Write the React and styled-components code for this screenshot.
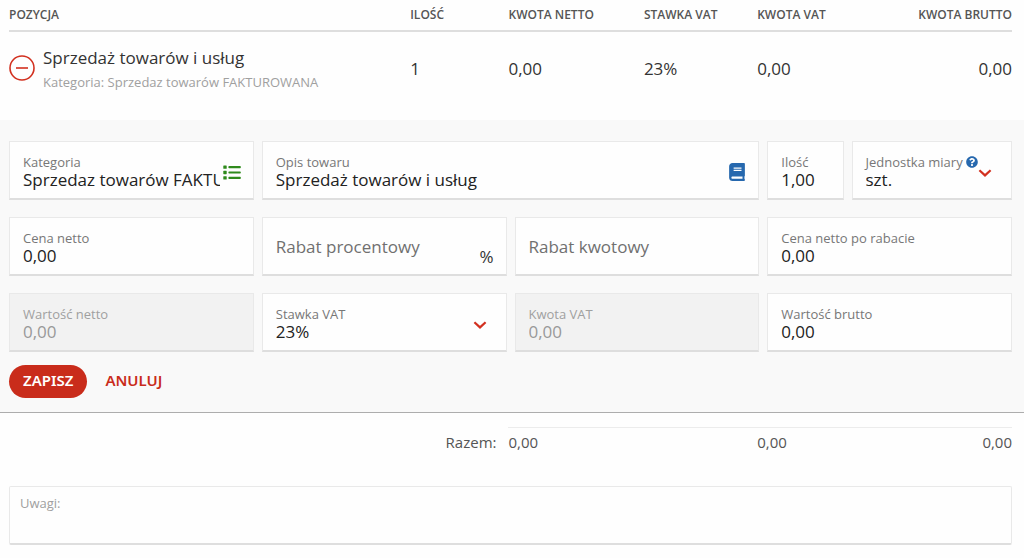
import { useState } from "react";
import styled, { createGlobalStyle } from "styled-components";
import { FaBook, FaQuestionCircle } from "react-icons/fa";

const emptyItem = {
  category: "Sprzedaz towarów FAKTUROWANA",
  description: "Sprzedaż towarów i usług",
  quantity: "1,00",
  unit: "szt.",
  netPrice: "0,00",
  percentDiscount: "",
  amountDiscount: "",
  discountedPrice: "0,00",
  netValue: "0,00",
  vatRate: "23%",
  vatAmount: "0,00",
  grossValue: "0,00",
};

function MinusIcon() {
  return (
    <svg width="26" height="26" viewBox="0 0 26 26" fill="none" stroke="#d2301f" strokeWidth="1.6">
      <circle cx="13" cy="13" r="12" />
      <path d="M7 13h12" />
    </svg>
  );
}

function ListIcon() {
  return (
    <svg width="18" height="15" viewBox="0 0 18 15" fill="#2f8a1c">
      <rect x="0.3" y="0.4" width="3.4" height="3.4" rx="0.6" />
      <rect x="0.3" y="5.8" width="3.4" height="3.4" rx="0.6" />
      <rect x="0.3" y="11.2" width="3.4" height="3.4" rx="0.6" />
      <rect x="5.4" y="1" width="12.4" height="2.2" rx="0.8" />
      <rect x="5.4" y="6.4" width="12.4" height="2.2" rx="0.8" />
      <rect x="5.4" y="11.8" width="12.4" height="2.2" rx="0.8" />
    </svg>
  );
}

function ChevronIcon() {
  return (
    <svg width="14" height="8" viewBox="0 0 14 8" fill="none" stroke="#d2301f" strokeWidth="2.2">
      <path d="M1.4 1.2 7 6.4l5.6-5.2" />
    </svg>
  );
}

function InputField({ id, label, span, value, onChange, disabled, children }) {
  return (
    <Field $span={span} $disabled={disabled}>
      <FieldBody>
        <Label htmlFor={id}>{label}</Label>
        <Input id={id} name={id} value={value} onChange={onChange} disabled={disabled} />
      </FieldBody>
      {children}
    </Field>
  );
}

function SelectField({ id, label, span, value, onChange, options, help }) {
  return (
    <Field $span={span}>
      <FieldBody>
        <LabelRow>
          <Label htmlFor={id}>{label}</Label>
          {help && <HelpButton type="button" aria-label="Pomoc"><FaQuestionCircle size={12} /></HelpButton>}
        </LabelRow>
        <Select id={id} name={id} value={value} onChange={onChange}>
          {options.map((e) => <option key={e}>{e}</option>)}
        </Select>
      </FieldBody>
      <Chevron><ChevronIcon /></Chevron>
    </Field>
  );
}

export default function App() {
  const [item, setItem] = useState(emptyItem);

  const handleChange = (e) => {
    setItem({ ...item, [e.target.name]: e.target.value });
  };

  const handleSubmit = (e) => {
    e.preventDefault();
  };

  const field = (name) => ({ id: name, value: item[name], onChange: handleChange });

  return (
    <Page>
      <GlobalStyle />
      <Section>
        <Table>
          <Columns />
          <thead>
            <tr>
              <HeadCell>Pozycja</HeadCell>
              <HeadCell>Ilość</HeadCell>
              <HeadCell>Kwota netto</HeadCell>
              <HeadCell>Stawka VAT</HeadCell>
              <HeadCell>Kwota VAT</HeadCell>
              <HeadCell $right>Kwota brutto</HeadCell>
            </tr>
          </thead>
          <tbody>
            <tr>
              <Cell>
                <Item>
                  <IconButton type="button" aria-label="Zwiń pozycję"><MinusIcon /></IconButton>
                  <ItemText>
                    <ItemName>Sprzedaż towarów i usług</ItemName>
                    <ItemCategory>Kategoria: Sprzedaz towarów FAKTUROWANA</ItemCategory>
                  </ItemText>
                </Item>
              </Cell>
              <Cell>1</Cell>
              <Cell>0,00</Cell>
              <Cell>23%</Cell>
              <Cell>0,00</Cell>
              <Cell $right>0,00</Cell>
            </tr>
          </tbody>
        </Table>
      </Section>

      <EditForm onSubmit={handleSubmit}>
        <Fields>
          <InputField {...field("category")} label="Kategoria" span={3}>
            <IconButton type="button" aria-label="Wybierz kategorię"><ListIcon /></IconButton>
          </InputField>
          <InputField {...field("description")} label="Opis towaru" span={6}>
            <IconButton type="button" aria-label="Słownik towarów"><FaBook size={18} color="#2668ae" /></IconButton>
          </InputField>
          <InputField {...field("quantity")} label="Ilość" span={1} />
          <SelectField {...field("unit")} label="Jednostka miary" span={2} options={["szt.", "godz.", "kg"]} help />

          <InputField {...field("netPrice")} label="Cena netto" span={3} />
          <Field $span={3}>
            <BigInput
              name="percentDiscount"
              aria-label="Rabat procentowy"
              placeholder="Rabat procentowy"
              value={item.percentDiscount}
              onChange={handleChange}
            />
            <Unit>%</Unit>
          </Field>
          <Field $span={3}>
            <BigInput
              name="amountDiscount"
              aria-label="Rabat kwotowy"
              placeholder="Rabat kwotowy"
              value={item.amountDiscount}
              onChange={handleChange}
            />
          </Field>
          <InputField {...field("discountedPrice")} label="Cena netto po rabacie" span={3} />

          <InputField {...field("netValue")} label="Wartość netto" span={3} disabled />
          <SelectField {...field("vatRate")} label="Stawka VAT" span={3} options={["23%", "8%", "5%", "0%"]} />
          <InputField {...field("vatAmount")} label="Kwota VAT" span={3} disabled />
          <InputField {...field("grossValue")} label="Wartość brutto" span={3} />
        </Fields>
        <Actions>
          <SaveButton type="submit">Zapisz</SaveButton>
          <CancelButton type="button" onClick={() => { setItem(emptyItem) }}>Anuluj</CancelButton>
        </Actions>
      </EditForm>

      <Summary>
        <Table>
          <Columns />
          <tbody>
            <tr>
              <TotalLabel colSpan={2} scope="row">Razem:</TotalLabel>
              <TotalCell>0,00</TotalCell>
              <TotalCell />
              <TotalCell>0,00</TotalCell>
              <TotalCell $right>0,00</TotalCell>
            </tr>
          </tbody>
        </Table>
        <Notes aria-label="Uwagi" placeholder="Uwagi:" />
      </Summary>
    </Page>
  );
}

function Columns() {
  return (
    <colgroup>
      <Col $width={40} />
      <Col $width={9.8} />
      <Col $width={13.5} />
      <Col $width={11.3} />
      <Col $width={12.7} />
      <Col $width={12.7} />
    </colgroup>
  );
}

const GlobalStyle = createGlobalStyle`
  * {
    box-sizing: border-box;
  }

  body {
    margin: 0;
    background-color: #fefefe;
  }

  body, button, input, select, textarea {
    font-family: "Open Sans", "Noto Sans", sans-serif;
  }
`
const Page = styled.main`
  color: #333;
  font-size: 17px;
`
const Section = styled.section`
  padding: 0 12px 0 9px;
`
const Table = styled.table`
  width: 100%;
  table-layout: fixed;
  border-collapse: collapse;
`
const Col = styled.col`
  width: ${(props) => props.$width}%;
`
const HeadCell = styled.th`
  height: 31px;
  padding: 0;
  border-bottom: 2px solid #dedede;
  color: #555;
  font-size: 12px;
  font-weight: 600;
  line-height: 29px;
  text-align: ${(props) => (props.$right ? "right" : "left")};
  text-transform: uppercase;
  vertical-align: top;
  white-space: nowrap;
`
const Cell = styled.td`
  height: 89px;
  padding: 0 0 16px;
  text-align: ${(props) => (props.$right ? "right" : "left")};
  vertical-align: middle;
`
const Item = styled.div`
  display: flex;
  align-items: center;
  gap: 8px;
`
const ItemText = styled.div`
  padding-top: 4px;
`
const ItemName = styled.div`
  line-height: 24px;
`
const ItemCategory = styled.div`
  color: #a0a0a0;
  font-size: 13px;
  line-height: 24px;
`
const IconButton = styled.button`
  display: flex;
  flex: none;
  padding: 0;
  border: none;
  background: none;
  cursor: pointer;
`
const EditForm = styled.form`
  padding: 21px 12px 14px 9px;
  border-bottom: 1px solid #adadad;
  background-color: #f9f9f9;
`
const Fields = styled.div`
  display: grid;
  grid-template-columns: repeat(12, minmax(0, 1fr));
  gap: 17px 8px;
`
const Field = styled.div`
  position: relative;
  grid-column: span ${(props) => props.$span};
  display: flex;
  align-items: center;
  gap: 3px;
  height: 59px;
  padding: 4px 12px 0 13px;
  border: 1px solid #e9e9e9;
  border-bottom: 2px solid #dedede;
  background-color: ${(props) => (props.$disabled ? "#f2f2f2" : "#fefefe")};
`
const FieldBody = styled.div`
  flex: 1;
  min-width: 0;
`
const LabelRow = styled.div`
  display: flex;
  align-items: center;
  gap: 3px;
`
const Label = styled.label`
  display: block;
  color: #777;
  font-size: 13px;
  line-height: 18px;
  white-space: nowrap;

  ${Field}:has(input:disabled) & {
    color: #a0a0a0;
  }
`
const HelpButton = styled(IconButton)`
  color: #2668ae;
`
const Input = styled.input`
  display: block;
  width: 100%;
  height: 24px;
  margin-top: -3px;
  padding: 0;
  border: none;
  outline: none;
  background: none;
  color: #222;
  font-size: 17px;

  &:disabled {
    color: #999;
  }
`
const BigInput = styled(Input)`
  height: 40px;

  &::placeholder {
    color: #707070;
    opacity: 1;
  }
`
const Select = styled.select`
  display: block;
  width: 100%;
  height: 24px;
  margin-top: -4px;
  padding: 0;
  border: none;
  outline: none;
  appearance: none;
  background: none;
  color: #222;
  font-size: 17px;
`
const Chevron = styled.span`
  position: absolute;
  top: 27px;
  right: 19px;
  display: flex;
  pointer-events: none;
`
const Unit = styled.span`
  padding-top: 16px;
`
const Actions = styled.div`
  display: flex;
  align-items: center;
  gap: 18px;
  margin-top: 13px;
`
const SaveButton = styled.button`
  height: 33px;
  padding: 0 14px 4px;
  border: none;
  border-radius: 17px;
  background-color: #c92c1b;
  color: #fff;
  font-family: "Noto Sans", sans-serif;
  font-size: 15px;
  font-weight: 600;
  text-transform: uppercase;
  cursor: pointer;
`
const CancelButton = styled(SaveButton)`
  padding: 0 0 4px;
  background: none;
  color: #c92c1b;
`
const Summary = styled(Section)`
  padding-top: 14px;
`
const TotalLabel = styled.th`
  padding: 0 12px 3px 0;
  color: #555;
  font-size: 15px;
  font-weight: normal;
  text-align: right;
`
const TotalCell = styled.td`
  height: 32px;
  padding: 0 0 3px;
  border-top: 1px solid #ececec;
  color: #555;
  font-size: 15px;
  text-align: ${(props) => (props.$right ? "right" : "left")};
`
const Notes = styled.textarea`
  display: block;
  width: 100%;
  height: 59px;
  margin-top: 26px;
  padding: 7px 10px;
  border: 1px solid #e9e9e9;
  border-bottom: 2px solid #dedede;
  border-radius: 2px;
  outline: none;
  resize: none;
  background-color: #fefefe;
  color: #333;
  font-size: 13px;
  line-height: 18px;

  &::placeholder {
    color: #a0a0a0;
    opacity: 1;
  }
`
